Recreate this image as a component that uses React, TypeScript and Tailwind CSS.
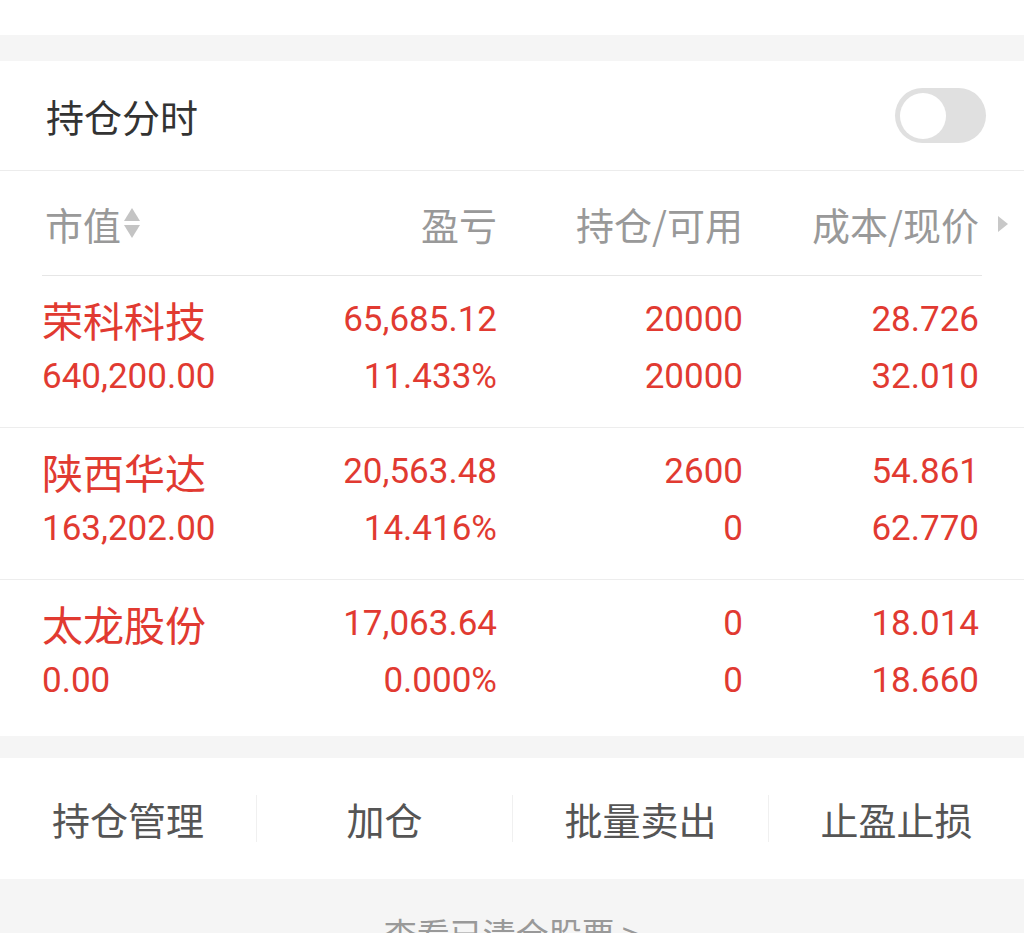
const cjk = "font-['Noto_Sans_CJK_SC','Noto_Sans',sans-serif]";
const num = "font-['Roboto','Noto_Sans_CJK_SC',sans-serif]";

type Holding = {
  name: string;
  value: string;
  profit: string;
  rate: string;
  hold: string;
  avail: string;
  cost: string;
  price: string;
};

const holdings: Holding[] = [
  { name: "荣科科技", value: "640,200.00", profit: "65,685.12", rate: "11.433%", hold: "20000", avail: "20000", cost: "28.726", price: "32.010" },
  { name: "陕西华达", value: "163,202.00", profit: "20,563.48", rate: "14.416%", hold: "2600", avail: "0", cost: "54.861", price: "62.770" },
  { name: "太龙股份", value: "0.00", profit: "17,063.64", rate: "0.000%", hold: "0", avail: "0", cost: "18.014", price: "18.660" },
];

const cols = "grid grid-cols-[210px_245px_246px_236px] pl-[42px]";

function Row({ h, last }: { h: Holding; last?: boolean }) {
  return (
    <div
      className={`${cols} pt-[15px] ${last ? "pb-[27px]" : "pb-[22px] border-b border-[#ededed]"} text-[#e13a31] leading-[57px]`}
    >
      <div className="flex flex-col">
        <span className={`${cjk} text-[41px]`}>{h.name}</span>
        <span className={`${num} text-[35px]`}>{h.value}</span>
      </div>
      <div className={`flex flex-col items-end ${num} text-[35px]`}>
        <span>{h.profit}</span>
        <span>{h.rate}</span>
      </div>
      <div className={`flex flex-col items-end ${num} text-[35px]`}>
        <span>{h.hold}</span>
        <span>{h.avail}</span>
      </div>
      <div className={`flex flex-col items-end ${num} text-[35px]`}>
        <span>{h.cost}</span>
        <span>{h.price}</span>
      </div>
    </div>
  );
}

export default function App() {
  const actions = ["持仓管理", "加仓", "批量卖出", "止盈止损"];

  return (
    <div className={`w-[1024px] h-[933px] overflow-hidden bg-[#f5f5f5] ${cjk}`}>
      <div className="h-[35px] bg-white" />
      <div className="h-[26px]" />

      <div className="bg-white">
        <div className="h-[110px] flex items-center justify-between pl-[46px] pr-[38px] border-b border-[#ececec]">
          <span className="text-[38px] text-[#333]">持仓分时</span>
          <div className="w-[91px] h-[55px] rounded-full bg-[#e0e0e0] flex items-center pl-[5px]">
            <div className="w-[46px] h-[46px] rounded-full bg-white" />
          </div>
        </div>

        <div className="px-[42px]">
          <div className="h-[105px] grid grid-cols-[210px_245px_246px_236px] items-center border-b border-[#e6e6e6] text-[38px] text-[#999] relative">
            <div className="flex items-center pl-[3px]">
              <span>市值</span>
              <svg width="20" height="34" viewBox="0 0 20 34" className="ml-[1px]">
                <path d="M10 2 L18 15 L2 15 Z" fill="#c4c4c4" />
                <path d="M10 32 L18 19 L2 19 Z" fill="#c4c4c4" />
              </svg>
            </div>
            <div className="text-right">盈亏</div>
            <div className="text-right">持仓/可用</div>
            <div className="text-right">成本/现价</div>
            <svg width="12" height="16" viewBox="0 0 12 16" className="absolute right-[-27px] top-[45px]">
              <path d="M1 0 L11 8 L1 16 Z" fill="#c8c8c8" />
            </svg>
          </div>
        </div>

        {holdings.map((h, i) => (
          <Row key={h.name} h={h} last={i === holdings.length - 1} />
        ))}
      </div>

      <div className="h-[22px]" />

      <div className="bg-white h-[121px] grid grid-cols-4 items-center">
        {actions.map((a, i) => (
          <div
            key={a}
            className={`flex items-center justify-center h-[47px] text-[38px] text-[#555] ${i > 0 ? "border-l border-[#f0f0f0]" : ""}`}
          >
            {a}
          </div>
        ))}
      </div>

      <div className="pt-[34px] flex justify-center text-[33px] text-[#999] leading-[40px]">
        查看已清仓股票 &gt;
      </div>
    </div>
  );
}
